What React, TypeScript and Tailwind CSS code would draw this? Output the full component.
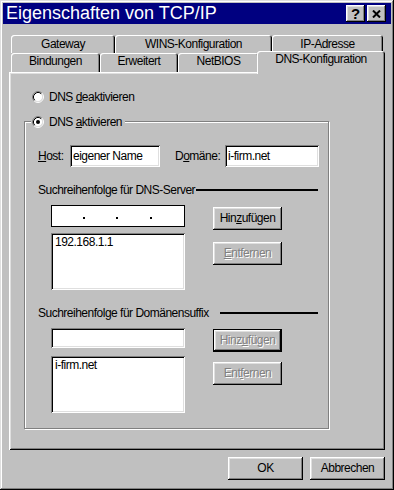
import { ReactNode } from "react";

const ui = "font-['Liberation_Sans',Arial,sans-serif] text-[12px] tracking-[-0.5px] text-black";
const raised = "shadow-[inset_-1px_-1px_#000,inset_1px_1px_#fff,inset_-2px_-2px_#808080,inset_2px_2px_#dfdfdf]";
const sunken = "shadow-[inset_1px_1px_#808080,inset_-1px_-1px_#fff,inset_2px_2px_#000,inset_-2px_-2px_#dfdfdf]";
const grayText = "text-[#808080] [text-shadow:1px_1px_0_#fff]";

function Radio({ checked }: { checked?: boolean }) {
  return (
    <svg width="12" height="12" viewBox="0 0 12 12" className="shrink-0">
      <circle cx="6" cy="6" r="4.5" fill="#fff" />
      <path d="M2.11 9.89A5.5 5.5 0 0 1 9.89 2.11" fill="none" stroke="#808080" />
      <path d="M9.89 2.11A5.5 5.5 0 0 1 2.11 9.89" fill="none" stroke="#fff" />
      <path d="M2.82 9.18A4.5 4.5 0 0 1 9.18 2.82" fill="none" stroke="#000" />
      <path d="M9.18 2.82A4.5 4.5 0 0 1 2.82 9.18" fill="none" stroke="#dfdfdf" />
      {checked && <circle cx="6" cy="6" r="2" fill="#000" />}
    </svg>
  );
}

function Btn({ children, disabled, isDefault, className = "" }: { children: ReactNode; disabled?: boolean; isDefault?: boolean; className?: string }) {
  return (
    <div
      className={`flex h-[23px] items-center justify-center leading-[23px] ${
        isDefault
          ? "shadow-[inset_0_0_0_1px_#000,inset_-2px_-2px_#000,inset_2px_2px_#fff,inset_-3px_-3px_#808080,inset_3px_3px_#dfdfdf]"
          : raised
      } ${disabled ? grayText : ""} ${className}`}
    >
      {children}
    </div>
  );
}

function Tab({ label, w, row }: { label: string; w: string; row: 1 | 2 }) {
  return (
    <div
      className={`${w} ${row === 1 ? "h-[18px] leading-[18px]" : "h-[19px] leading-[17px]"} rounded-t-[3px] text-center shadow-[inset_1px_1px_#fff,inset_-1px_0_#000,inset_-2px_0_#808080]`}
    >
      {label}
    </div>
  );
}

function SectionLabel({ children, gap }: { children: ReactNode; gap: string }) {
  return (
    <div className="flex h-[14px] items-center pl-[14px] pr-[10px]">
      <span className="leading-[14px] whitespace-nowrap">{children}</span>
      <div className={`h-[2px] flex-1 bg-black ${gap}`} />
    </div>
  );
}

export default function App() {
  return (
    <div
      className={`flex h-[490px] w-[394px] flex-col bg-[#c0c0c0] p-[3px] shadow-[inset_-1px_-1px_#000,inset_1px_1px_#dfdfdf,inset_-2px_-2px_#808080,inset_2px_2px_#fff] ${ui}`}
    >
      {/* title bar */}
      <div className="flex h-[21px] items-center gap-[2px] bg-[#000080] pl-[3px] pr-[5px]">
        <span className="flex-1 text-[18px] leading-[21px] tracking-normal text-white">Eigenschaften von TCP/IP</span>
        <div className={`flex h-[17px] w-[19px] items-center justify-center bg-[#c0c0c0] ${raised}`}>
          <span className="text-[15px] font-bold leading-[15px] tracking-normal">?</span>
        </div>
        <div className={`flex h-[17px] w-[19px] items-center justify-center bg-[#c0c0c0] ${raised}`}>
          <svg width="9" height="8" viewBox="0 0 9 8">
            <path d="M1 0.5L8 7.5M8 0.5L1 7.5" stroke="#000" strokeWidth="2" />
          </svg>
        </div>
      </div>

      {/* tabs + panel */}
      <div className="ml-[6px] mt-[11px] w-[376px]">
        <div className="mx-[2px] flex">
          <Tab label="Gateway" w="w-[104px]" row={1} />
          <Tab label="WINS-Konfiguration" w="w-[157px]" row={1} />
          <Tab label="IP-Adresse" w="w-[111px]" row={1} />
        </div>
        <div className="mx-[2px] flex h-[19px]">
          <Tab label="Bindungen" w="w-[89px]" row={2} />
          <Tab label="Erweitert" w="w-[78px]" row={2} />
          <Tab label="NetBIOS" w="w-[81px]" row={2} />
          <div className="relative z-10 -mx-[2px] -mt-[2px] h-[23px] w-[128px] rounded-t-[3px] bg-[#c0c0c0] text-center leading-[17px] shadow-[inset_1px_1px_#fff,inset_-1px_0_#000,inset_-2px_0_#808080]">
            DNS-Konfiguration
          </div>
        </div>

        <div className="flex h-[378px] flex-col shadow-[inset_1px_1px_#fff,inset_-1px_-1px_#000,inset_2px_2px_#dfdfdf,inset_-2px_-2px_#808080]">
          <div className="ml-[23px] mt-[19px] flex h-[12px] items-center gap-[5px]">
            <Radio />
            <span className="leading-[15px]">
              DNS <u>d</u>eaktivieren
            </span>
          </div>

          {/* group box */}
          <div className="ml-[15px] mt-[18px] flex h-[308px] w-[305px] flex-col border border-[#808080] shadow-[inset_1px_1px_#fff,1px_1px_#fff]">
            <div className="-mt-[6px] ml-[6px] flex h-[12px] items-center gap-[5px] self-start bg-[#c0c0c0] pl-[1px] pr-[3px]">
              <Radio checked />
              <span className="leading-[15px]">
                DNS <u>a</u>ktivieren
              </span>
            </div>

            <div className="mt-[17px] flex h-[22px] items-center pl-[13px]">
              <span className="w-[32px] leading-[22px]">
                <u>H</u>ost:
              </span>
              <div className={`h-[22px] w-[90px] bg-white pl-[3px] leading-[22px] ${sunken}`}>eigener Name</div>
              <span className="ml-[15px] w-[50px] leading-[22px]">
                D<u>o</u>mäne:
              </span>
              <div className={`h-[22px] w-[94px] bg-white pl-[3px] leading-[22px] ${sunken}`}>i-firm.net</div>
            </div>

            <div className="mt-[16px] -ml-px">
              <SectionLabel gap="ml-[1px]">Suchreihenfolge für DNS-Server</SectionLabel>
            </div>

            <div className="mt-[8px] flex pl-[26px]">
              <div className="flex w-[134px] flex-col gap-[6px]">
                <div className="flex h-[22px] bg-white pl-[32px] pt-[12px] shadow-[inset_0_0_0_1px_#000]">
                  <span className="h-[2px] w-[2px] bg-black" />
                  <span className="ml-[31px] h-[2px] w-[2px] bg-black" />
                  <span className="ml-[32px] h-[2px] w-[2px] bg-black" />
                </div>
                <div className={`h-[57px] bg-white pl-[4px] pt-[2px] leading-[15px] ${sunken}`}>192.168.1.1</div>
              </div>
              <div className="ml-[28px] mt-[2px] flex w-[69px] flex-col gap-[12px]">
                <Btn>
                  Hin<u>z</u>ufügen
                </Btn>
                <Btn disabled>
                  <u>E</u>ntfernen
                </Btn>
              </div>
            </div>

            <div className="mt-[16px] -ml-px">
              <SectionLabel gap="ml-[11px]">Suchreihenfolge für Domänensuffix</SectionLabel>
            </div>

            <div className="mt-[8px] flex pl-[26px]">
              <div className="flex w-[134px] flex-col gap-[8px]">
                <div className={`h-[20px] bg-white ${sunken}`} />
                <div className={`h-[57px] bg-white pl-[4px] pt-[2px] leading-[15px] ${sunken}`}>i-firm.net</div>
              </div>
              <div className="ml-[28px] mt-[1px] flex w-[69px] flex-col gap-[10px]">
                <Btn disabled isDefault>
                  Hinz<u>u</u>fügen
                </Btn>
                <Btn disabled>
                  Ent<u>f</u>ernen
                </Btn>
              </div>
            </div>
          </div>
        </div>
      </div>

      <div className="mt-[7px] flex justify-end gap-[7px] pr-[6px]">
        <Btn className="w-[75px]">OK</Btn>
        <Btn className="w-[75px]">Abbrechen</Btn>
      </div>
    </div>
  );
}
